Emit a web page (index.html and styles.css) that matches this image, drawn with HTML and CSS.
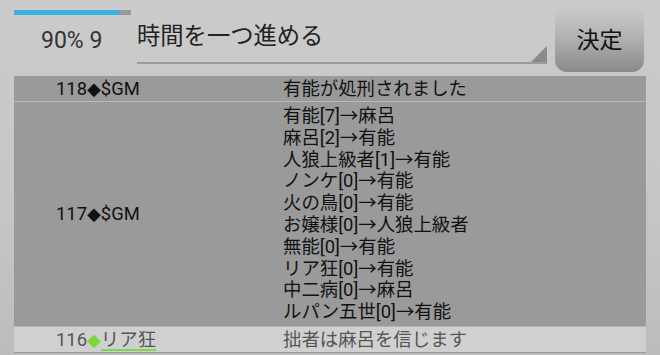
FILE: index.html
```html
<!DOCTYPE html>
<html lang="ja">
<head>
    <meta charset="UTF-8">
    <meta name="viewport" content="width=device-width, initial-scale=1.0">
    <title>人狼ログ</title>
    <link rel="stylesheet" href="styles.css">
</head>
<body>
    <div class="toolbar">
        <div class="status">
            <div class="progress"><div class="progress-fill" style="width: 90%"></div></div>
            <div class="status-text">90% 9</div>
        </div>
        <div class="spinner">
            <span class="spinner-text">時間を一つ進める</span>
            <span class="spinner-arrow"></span>
        </div>
        <button type="button" class="submit">決定</button>
    </div>
    <div class="log">
        <div class="entry">
            <div class="who">118<span class="mark">◆</span>$GM</div>
            <div class="msg">有能が処刑されました</div>
        </div>
        <div class="entry tall">
            <div class="who">117<span class="mark">◆</span>$GM</div>
            <div class="msg">
                <div>有能[7]→麻呂</div>
                <div>麻呂[2]→有能</div>
                <div>人狼上級者[1]→有能</div>
                <div>ノンケ[0]→有能</div>
                <div>火の鳥[0]→有能</div>
                <div>お嬢様[0]→人狼上級者</div>
                <div>無能[0]→有能</div>
                <div>リア狂[0]→有能</div>
                <div>中二病[0]→麻呂</div>
                <div>ルパン五世[0]→有能</div>
            </div>
        </div>
        <div class="entry player">
            <div class="who">116<span class="mark green">◆</span><span class="name">リア狂</span></div>
            <div class="msg">拙者は麻呂を信じます</div>
        </div>
    </div>
</body>
</html>
```

FILE: styles.css
```css
body {
    margin: 0;
    width: 660px;
    height: 355px;
    overflow: hidden;
    background: linear-gradient(#cbcbcb, #c6c6c6 60%, #bcbcbc);
    font-family: Roboto, "Noto Sans CJK JP", sans-serif;
    color: #111;
}

.toolbar {
    display: flex;
    height: 76px;
    padding-left: 14px;
}

.status {
    width: 123px;
}

.progress {
    margin-top: 10px;
    width: 117px;
    height: 5px;
    background-color: #999;
}

.progress-fill {
    height: 100%;
    background-color: #38b2e2;
}

.status-text {
    margin-top: 10px;
    padding-left: 27px;
    font-size: 23px;
    line-height: 32px;
    color: #333;
}

.spinner {
    position: relative;
    width: 410px;
    height: 62px;
    border-bottom: 2px solid #9c9c9c;
}

.spinner-text {
    display: block;
    padding-top: 20px;
    font-size: 23.3px;
    line-height: 32px;
    color: #222;
}

.spinner-arrow {
    position: absolute;
    right: 0;
    bottom: 0;
    width: 0;
    height: 0;
    border-left: 16px solid transparent;
    border-bottom: 16px solid #8a8a8a;
}

.submit {
    margin: 4px 0 0 8px;
    width: 89px;
    height: 68px;
    border: none;
    border-radius: 12px;
    background: linear-gradient(#cdcdcd, #b4b4b4 45%, #8a8a8a);
    font-family: Roboto, "Noto Sans CJK JP", sans-serif;
    font-size: 23px;
    color: #111;
    padding: 0;
}

.log {
    margin: 0 14px;
    font-size: 18.4px;
}

.entry {
    display: grid;
    grid-template-columns: 227px 1fr;
    align-items: center;
    padding-left: 42px;
    height: 25px;
    line-height: 25px;
    background-color: #9a9a9a;
    border-bottom: 1px solid #b9b9b9;
}

.entry.tall {
    height: 224px;
    line-height: 21.8px;
    border-bottom-color: #b2b2b2;
}

.entry.player {
    background-color: #d0d0d0;
    color: #555;
    border-bottom-color: #9a9a9a;
}

.mark {
    font-family: "DejaVu Sans", sans-serif;
    font-size: 18px;
}

.mark.green {
    color: #7ed83a;
}

.name {
    text-decoration: underline;
    text-decoration-color: #79d94a;
    text-decoration-thickness: 2px;
    text-underline-offset: 3px;
}
```
